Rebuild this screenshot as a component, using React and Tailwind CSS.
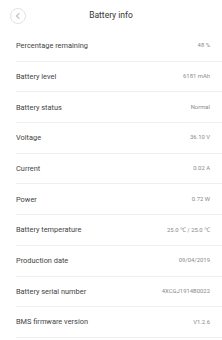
const ROWS = [
  ["Percentage remaining", "48 %"],
  ["Battery level", "6181 mAh"],
  ["Battery status", "Normal"],
  ["Voltage", "36.10 V"],
  ["Current", "0.02 A"],
  ["Power", "0.72 W"],
  ["Battery temperature", "25.0 ℃ / 25.0 ℃"],
  ["Production date", "09/04/2019"],
  ["Battery serial number", "4XCGJ1914B0022"],
  ["BMS firmware version", "V1.2.6"],
];

export default function App() {
  return (
    <div className="w-[222px] h-[340px] bg-white overflow-hidden" style={{ fontFamily: "Roboto, 'Noto Sans', sans-serif" }}>
      {/* Header */}
      <div className="relative h-[31px] flex items-center justify-center">
        <div className="absolute left-[10px] top-[8px] w-[16px] h-[16px] rounded-full border border-[#e2e2e2] flex items-center justify-center">
          <svg width="8" height="8" viewBox="0 0 8 8" fill="none">
            <path d="M5 1.5 L2.5 4 L5 6.5" stroke="#8a8a8a" strokeWidth="0.9" strokeLinecap="round" strokeLinejoin="round" />
          </svg>
        </div>
        <span className="text-[8.5px] text-[#333] mt-[-1px]">Battery info</span>
      </div>

      {/* Rows */}
      <div className="flex flex-col">
        {ROWS.map(([label, value]) => (
          <div key={label} className="ml-4 pr-3 h-[30.7px] flex items-center justify-between border-b border-[#efefef]">
            <span className="text-[7.4px] text-[#444]">{label}</span>
            <span className="text-[5.9px] text-[#8a8a8a]">{value}</span>
          </div>
        ))}
      </div>
    </div>
  );
}
